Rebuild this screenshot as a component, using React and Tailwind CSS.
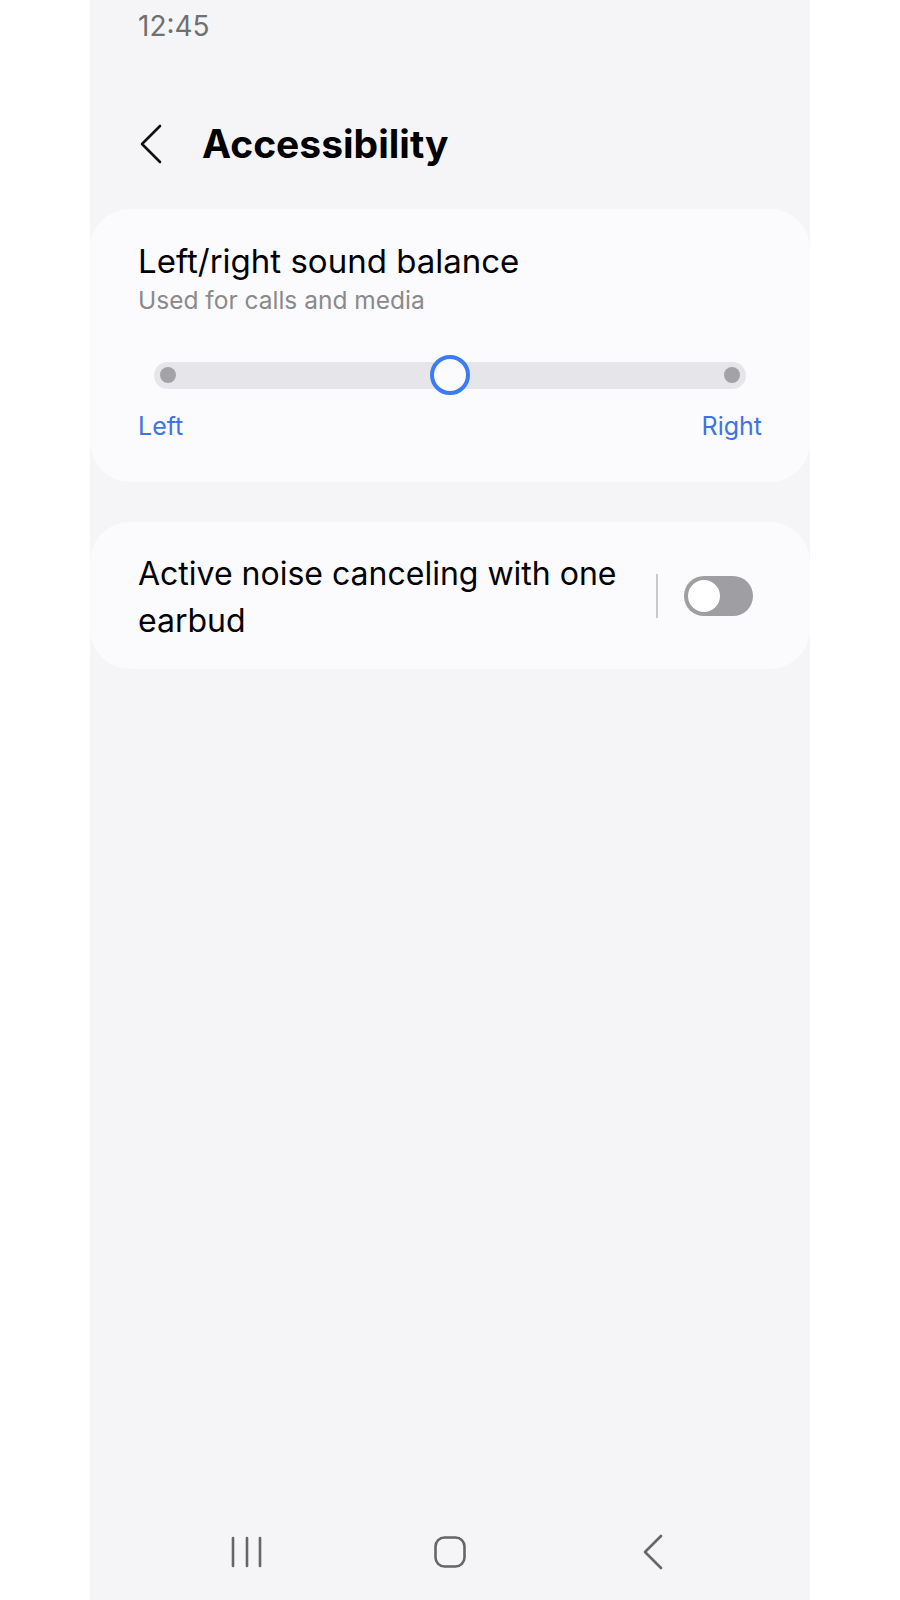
import { useState } from 'react';

function NavBar() {
  return (
    <div className="mt-auto h-[96px] flex items-center justify-center gap-[143px]">
      <svg width="60" height="40" viewBox="0 0 60 40" fill="none" stroke="#666666" strokeWidth="2.6" strokeLinecap="round">
        <line x1="16" y1="6" x2="16" y2="34" />
        <line x1="30" y1="6" x2="30" y2="34" />
        <line x1="43" y1="6" x2="43" y2="34" />
      </svg>
      <svg width="60" height="40" viewBox="0 0 60 40" fill="none" stroke="#666666" strokeWidth="2.6">
        <rect x="15.5" y="5.5" width="29" height="29" rx="9" />
      </svg>
      <svg width="60" height="40" viewBox="0 0 60 40" fill="none" stroke="#666666" strokeWidth="2.6" strokeLinecap="round" strokeLinejoin="round">
        <polyline points="38,4 22,20 38,36" />
      </svg>
    </div>
  )
}

function BalanceCard() {
  return (
    <div className="rounded-[40px] bg-[#fbfbfd] h-[273px] px-[48px] pt-[32px]">
      <div className="text-[33px] leading-[40px] text-black">Left/right sound balance</div>
      <div className="mt-[4px] text-[24.5px] leading-[30px] text-[#8a8a8e]">Used for calls and media</div>

      <div className="mt-[40px] h-[40px] px-[16px] flex items-center">
        <div className="relative w-full h-[27px] rounded-full bg-[#e6e6ea] flex items-center justify-between px-[6px]">
          <div className="w-[16px] h-[16px] rounded-full bg-[#a3a3a6]"></div>
          <div className="w-[16px] h-[16px] rounded-full bg-[#a3a3a6]"></div>
          {/* thumb */}
          <div className="absolute left-1/2 top-1/2 -translate-x-1/2 -translate-y-1/2 w-[40px] h-[40px] rounded-full border-[4px] border-[#3b7cf6] bg-[#fbfbfd]"></div>
        </div>
      </div>

      <div className="mt-[16px] flex justify-between text-[25px] leading-[30px] text-[#3e74e0]">
        <span>Left</span>
        <span>Right</span>
      </div>
    </div>
  )
}

function AncCard() {
  const [on, setOn] = useState(false);
  return (
    <div className="mt-[40px] rounded-[40px] bg-[#fbfbfd] h-[147px] pl-[48px] pr-[57px] flex items-center">
      <div className="flex-1 pt-[2px] text-[32px] leading-[47px] text-black">Active noise canceling with one earbud</div>
      <div className="ml-[24px] w-[2px] h-[44px] bg-[#c9c9cc]"></div>
      <button onClick={() => setOn(!on)} className={on ? 'ml-[26px] relative w-[69px] h-[40px] rounded-full bg-[#3b7cf6]' : 'ml-[26px] relative w-[69px] h-[40px] rounded-full bg-[#9e9ea3]'}>
        <span className={on ? 'absolute top-[4px] right-[4px] w-[32px] h-[32px] rounded-full bg-white' : 'absolute top-[4px] left-[4px] w-[32px] h-[32px] rounded-full bg-white'}></span>
      </button>
    </div>
  )
}

export default function App() {
  return (
    <div className="w-full min-h-[1600px] bg-white flex justify-center" style={{ fontFamily: 'Inter, "Noto Sans", sans-serif' }}>
      <div className="w-[720px] h-[1600px] bg-[#f5f5f7] flex flex-col">
        <div className="h-[53px] pl-[48px] text-[28px] leading-[53px] text-[#707070]">12:45</div>

        <div className="mt-[60px] h-[62px] mb-[34px] flex items-center pl-[48px]">
          <svg width="28" height="40" viewBox="0 0 28 40" fill="none" stroke="#111111" strokeWidth="2.6" strokeLinecap="round" strokeLinejoin="round">
            <polyline points="22,2 4,20 22,38" />
          </svg>
          <h1 className="ml-[36px] text-[39px] font-bold text-black">Accessibility</h1>
        </div>

        <BalanceCard />
        <AncCard />

        <NavBar />
      </div>
    </div>
  )
}
